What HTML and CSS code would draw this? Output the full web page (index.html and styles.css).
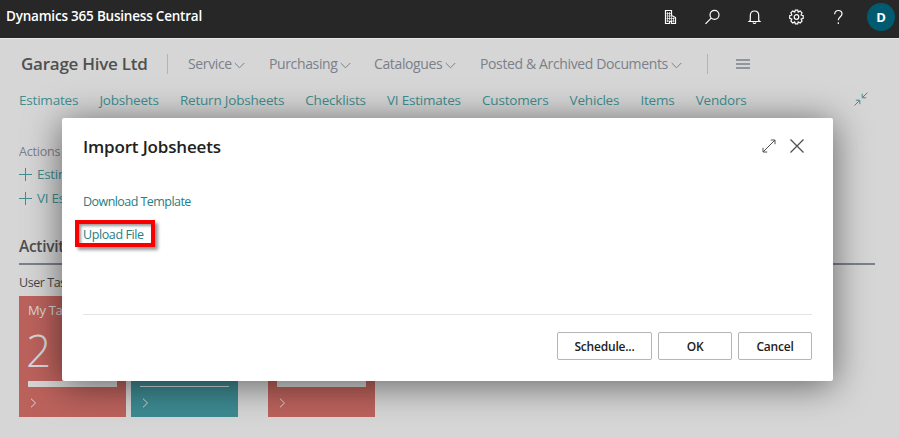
FILE: index.html
```html
<!DOCTYPE html>
<html lang="en">
<head>
<meta charset="utf-8">
<title>Dynamics 365 Business Central</title>
<link rel="stylesheet" href="styles.css">
</head>
<body>
<header class="topbar">
  <span class="product">Dynamics 365 Business Central</span>
  <div class="tools">
    <svg width="16" height="16" viewBox="0 0 16 16"><path d="M3.500 14.500V1.500H9.500V6.500L13.500 8.500V14.500H9.500V12.500H7.500V14.500Z"/><path class="fine" d="M5.500 3V13M7.500 3V11M9.500 7V12.500M11.500 8.500V13.500M4.500 4.500H9M4.500 7H9M4.500 9.500H12.500M4.500 12H12.500"/></svg>
    <svg width="16" height="16" viewBox="0 0 16 16"><circle cx="10.500" cy="5.800" r="4.500"/><path d="M7.200 9.100L1.500 14.800"/></svg>
    <svg width="16" height="16" viewBox="0 0 16 16"><path d="M4.300 11.500V6.500C4.300 3.500 6 2 8.500 2S12.700 3.500 12.700 6.500V11.500L13.800 12.500H3.200ZM7 13.500C7.500 14.800 9.500 14.800 10 13.500"/></svg>
    <svg width="16" height="16" viewBox="0 0 16 16"><path d="M7.300 1.200H9.700L10.200 3.100L12.200 1.900L14 3.900L13.100 5.900L15.200 6.600V9.400L13.100 10.100L14 12.100L12.200 14L10.200 12.900L9.700 14.800H7.300L6.700 12.900L4.700 14L2.900 12.100L3.800 10.100L1.700 9.400V6.600L3.800 5.900L2.900 3.900L4.700 1.900L6.700 3.100Z"/><circle cx="8.500" cy="8" r="2.300"/></svg>
    <svg width="16" height="16" viewBox="0 0 16 16"><path d="M4.700 5.300C4.700 2.700 6.300 1.500 8.300 1.500S12 2.800 12 5C12 7.600 8.300 8 8.300 11.300M8.300 13.200V15"/></svg>
    <span class="avatar">D</span>
  </div>
</header>
<main class="page">
  <nav class="menu">
    <h1 class="company">Garage Hive Ltd</h1>
    <i class="sep"></i>
    <span class="menu-item service">Service<svg class="chev" width="11" height="7" viewBox="0 0 11 7"><path d="M.7 1L5.500 5.800L10.300 1"/></svg></span>
    <span class="menu-item purchasing">Purchasing<svg class="chev" width="11" height="7" viewBox="0 0 11 7"><path d="M.7 1L5.500 5.800L10.300 1"/></svg></span>
    <span class="menu-item catalogues">Catalogues<svg class="chev" width="11" height="7" viewBox="0 0 11 7"><path d="M.7 1L5.500 5.800L10.300 1"/></svg></span>
    <span class="menu-item documents">Posted &amp; Archived Documents<svg class="chev" width="11" height="7" viewBox="0 0 11 7"><path d="M.7 1L5.500 5.800L10.300 1"/></svg></span>
    <i class="sep"></i>
    <svg class="burger" width="14" height="10" viewBox="0 0 14 10"><path d="M0 1H14M0 5H14M0 9H14"/></svg>
  </nav>
  <nav class="tabs">
    <a>Estimates</a><a>Jobsheets</a><a>Return Jobsheets</a><a>Checklists</a><a>VI Estimates</a><a>Customers</a><a>Vehicles</a><a>Items</a><a>Vendors</a>
    <svg class="collapse" width="14" height="14" viewBox="0 0 14 14"><path d="M13.500 .5L8.500 5.500M8.200 1.800V5.800H12.200M.5 13.500L5.500 8.500M1.800 8.200H5.800V12.200"/></svg>
  </nav>
  <section class="actions">
    <div class="caption">Actions</div>
    <a class="action"><svg width="13" height="13" viewBox="0 0 13 13"><path d="M6.500 0V13M0 6.500H13"/></svg>Estimate</a>
    <a class="action"><svg width="13" height="13" viewBox="0 0 13 13"><path d="M6.500 0V13M0 6.500H13"/></svg>VI Est</a>
  </section>
  <section class="activities">
    <h2>Activities</h2>
    <div class="group">User Tasks</div>
    <div class="tiles">
      <div class="tile red"><span class="name">My Tasks</span><span class="count">2</span><i class="bar"></i><svg width="7" height="10" viewBox="0 0 7 10"><path d="M1 .7L5.500 5L1 9.300"/></svg></div>
      <div class="tile teal"><i class="bar thin"></i><svg width="7" height="10" viewBox="0 0 7 10"><path d="M1 .7L5.500 5L1 9.300"/></svg></div>
      <div class="tile red apart"><i class="bar"></i><svg width="7" height="10" viewBox="0 0 7 10"><path d="M1 .7L5.500 5L1 9.300"/></svg></div>
    </div>
  </section>
</main>
<div class="dialog" role="dialog">
  <div class="dialog-head">
    <h2>Import Jobsheets</h2>
    <svg width="14" height="14" viewBox="0 0 14 14"><path d="M1 13L13 1M8.800 1H13V5.200M1 8.800V13H5.200"/></svg>
    <svg class="close" width="14" height="14" viewBox="0 0 14 14"><path d="M.5 .5L13.500 13.500M13.500 .5L.5 13.500"/></svg>
  </div>
  <div class="dialog-body">
    <a>Download Template</a>
    <a class="marked">Upload File</a>
  </div>
  <div class="dialog-foot">
    <button class="wide">Schedule...</button><button>OK</button><button>Cancel</button>
  </div>
</div>
</body>
</html>
```
FILE: styles.css
```css
* { box-sizing: border-box; }
body { margin: 0; width: 899px; height: 438px; overflow: hidden; background: #d6d6d6; font-family: "Open Sans", "Noto Sans", sans-serif; font-size: 13px; color: #505050; position: relative; }
h1, h2 { margin: 0; font-weight: 600; }
svg { fill: none; stroke: currentColor; flex: none; display: block; }
a, span, div, h1, h2 { white-space: nowrap; }

.topbar { height: 38px; background: #272727; color: #fff; display: flex; align-items: center; justify-content: space-between; padding: 0 4px 4px 6px; }
.product { font-size: 13.500px; font-weight: 600; letter-spacing: -.21px; padding-bottom: 2px; }
.tools { display: flex; align-items: center; gap: 26px; }
.tools svg { stroke-width: 1.200; }
.tools .fine { stroke-width: .7; }
.avatar { width: 28px; height: 28px; border-radius: 50%; background: #005b70; display: grid; place-items: center; font-weight: 700; font-size: 13px; margin-left: -5px; }

.page { border-top: 1px solid #e8e8e8; padding: 0 24px 0 19px; }
.menu { display: flex; align-items: center; height: 50px; padding-left: 2px; color: #7b808a; }
.company { width: 146px; font-size: 17px; color: #505050; letter-spacing: -.25px; padding-bottom: 2px; }
.sep { width: 1px; height: 20px; background: #b4b4b4; }
.menu-item { display: flex; align-items: center; justify-content: space-between; height: 20px; font-size: 14px; letter-spacing: -.37px; padding-bottom: 1px; }
.chev { margin-top: 3px; }
.service { width: 57px; margin-left: 20px; }
.purchasing { width: 82px; margin-left: 24px; }
.catalogues { width: 82px; margin-left: 23px; }
.documents { width: 202px; margin-left: 24px; margin-right: 25px; }
.burger { margin-left: 28px; stroke-width: 1.400; }

.tabs { display: flex; align-items: center; gap: 21.200px; height: 22px; padding-bottom: 1px; color: #3f8e90; font-size: 13.500px; letter-spacing: -.2px; }
.collapse { margin-left: auto; margin-right: 7px; margin-top: -2px; }
.actions { margin-top: 29px; width: 70px; overflow: hidden; }
.caption { height: 22px; line-height: 24px; font-size: 12.500px; letter-spacing: -.2px; color: #7b808a; }
.action { display: flex; align-items: center; gap: 5px; height: 24px; color: #3f8e90; font-size: 13.500px; letter-spacing: -.3px; }
.activities h2 { font-size: 15.500px; letter-spacing: -.3px; line-height: 24px; margin-top: 24px; padding-bottom: 5px; border-bottom: 2px solid #7b8090; }
.group { height: 31px; line-height: 35px; font-size: 12.500px; letter-spacing: -.45px; color: #484848; }
.tiles { display: flex; gap: 5px; }
.tile { width: 107px; height: 121px; padding: 5px 9px 9px; color: #d8d8d8; display: flex; flex-direction: column; }
.red { background: #bc625c; }
.teal { background: #3d8a91; }
.apart { margin-left: 25px; }
.name { font-size: 13px; letter-spacing: -.3px; line-height: 18px; }
.count { font-size: 44px; line-height: 62px; font-weight: 300; margin-left: -2px; }
.bar { height: 6px; background: #d6d6d6; margin-top: auto; flex: none; }
.thin { height: 1px; }
.tile svg { margin: 11px 0 0 2px; }

.dialog { position: absolute; left: 62px; top: 118px; width: 771px; height: 263px; background: #fff; border-radius: 2px; padding: 0 21px; box-shadow: 0 4px 36px rgba(0,0,0,.55); display: flex; flex-direction: column; color: #212121; }
.dialog-head { display: flex; align-items: center; height: 55px; gap: 14px; color: #505050; }
.dialog-head h2 { margin-right: auto; font-size: 17px; letter-spacing: -.17px; padding-top: 1px; color: #212121; }
.close { margin-right: 8px; stroke-width: 1.300; }
.dialog-body { height: 141px; padding-top: 18px; display: flex; flex-direction: column; align-items: flex-start; color: #268084; font-size: 12.500px; letter-spacing: -.5px; }
.dialog-body a { height: 21px; line-height: 21px; letter-spacing: -.55px; }
.dialog-body .marked { margin: 8px 0 0 -8px; width: 80px; height: 27px; line-height: 21px; letter-spacing: -.4px; padding-left: 4px; border: 4px solid #f80000; box-shadow: 3px 3px 3px rgba(0,0,0,.4), inset 2px 2px 3px rgba(0,0,0,.4); }
.dialog-foot { border-top: 1px solid #e4e4e4; display: flex; justify-content: flex-end; gap: 6px; padding-top: 17px; }
button { width: 74px; height: 28px; padding: 0; border: 1px solid #b5b5b5; border-radius: 2px; background: #fff; color: #212121; font: 600 12px "Open Sans", sans-serif; letter-spacing: -.2px; }
.wide { width: 95px; }
```
